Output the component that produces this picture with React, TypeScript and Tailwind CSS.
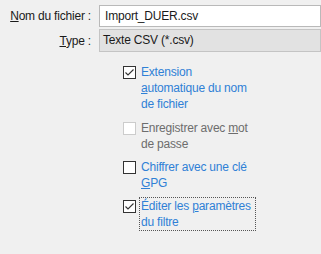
import type { ReactNode } from "react";

function Box({ checked, disabled }: { checked?: boolean; disabled?: boolean }) {
  return (
    <span
      className={
        "mt-[3px] flex h-[13px] w-[13px] shrink-0 items-center justify-center border bg-white " +
        (disabled ? "border-[#cccccc]" : "border-[#333333]")
      }
    >
      {checked && (
        <svg width="11" height="11" viewBox="0 0 11 11">
          <path d="M1.5 5.5 L4 8 L9.5 2.5" fill="none" stroke="#333333" strokeWidth="1.1" />
        </svg>
      )}
    </span>
  );
}

function Option({
  children,
  checked,
  disabled,
  focused,
  className = "",
}: {
  children: ReactNode;
  checked?: boolean;
  disabled?: boolean;
  focused?: boolean;
  className?: string;
}) {
  return (
    <div className={"flex items-start gap-[3px] " + className}>
      <Box checked={checked} disabled={disabled} />
      <span
        className={
          "w-[117px] border px-[1px] leading-[16px] " +
          (focused ? "border-dotted border-[#555555] " : "border-transparent ") +
          (disabled ? "text-[#6d6d6d]" : "text-[#2f80d6]")
        }
      >
        {children}
      </span>
    </div>
  );
}

export default function App() {
  return (
    <div className="h-[254px] w-[321px] overflow-hidden bg-[#f0f0f0] text-[12px] tracking-[-0.2px] text-[#1a1a1a] font-['Liberation_Sans',sans-serif]">
      <div className="flex items-center pt-[5px]">
        <label className="w-[91px] text-right">
          <u>N</u>om du fichier :
        </label>
        <div className="ml-[8px] h-[22px] flex-1 border border-[#b9b9b9] bg-white pl-[5px] leading-[20px]">
          Import_DUER.csv
        </div>
      </div>
      <div className="mt-[2px] flex items-center">
        <label className="w-[91px] text-right">
          <u>T</u>ype :
        </label>
        <div className="ml-[8px] h-[23px] flex-1 border border-[#c4c4c4] bg-[#e2e2e2] pl-[3px] leading-[21px]">
          Texte CSV (*.csv)
        </div>
      </div>

      <div className="flex flex-col pl-[123px] pt-[11px]">
        <Option checked>
          Extension <u>a</u>utomatique du nom de fichier
        </Option>
        <Option disabled className="mt-[6px]">
          Enregistrer avec <u>m</u>ot de passe
        </Option>
        <Option className="mt-[5px]">
          Chiffrer avec une clé <u>G</u>PG
        </Option>
        <Option checked focused className="mt-[5px]">
          Éditer les <u>p</u>aramètres du filtre
        </Option>
      </div>
    </div>
  );
}
